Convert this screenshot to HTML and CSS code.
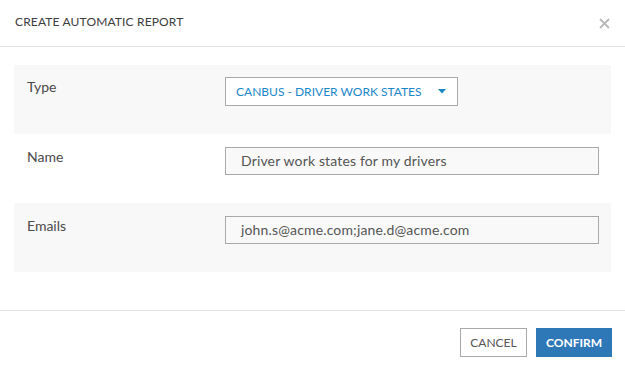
FILE: index.html
```html
<!DOCTYPE html>
<html>
<head>
<meta charset="utf-8">
<link rel="stylesheet" href="styles.css">
</head>
<body>
<div class="dialog">
  <div class="header">
    <span class="title">CREATE AUTOMATIC REPORT</span>
    <span class="close" aria-label="Close">
      <svg width="11" height="11" viewBox="0 0 11 11"><path d="M1 1L10 10M10 1L1 10" stroke="#b9b9b9" stroke-width="1.8" fill="none"/></svg>
    </span>
  </div>
  <div class="body">
    <div class="row shaded">
      <div class="label">Type</div>
      <div class="select">
        <span>CANBUS - DRIVER WORK STATES</span>
        <svg class="caret" width="8" height="5" viewBox="0 0 8 5"><path d="M0 0H8L4 4.5Z" fill="#1b87c9"/></svg>
      </div>
    </div>
    <div class="row">
      <div class="label">Name</div>
      <div class="input">Driver work states for my drivers</div>
    </div>
    <div class="row shaded">
      <div class="label">Emails</div>
      <div class="input">john.s@acme.com;jane.d@acme.com</div>
    </div>
  </div>
  <div class="footer">
    <button class="btn cancel">CANCEL</button>
    <button class="btn confirm">CONFIRM</button>
  </div>
</div>
</body>
</html>
```
FILE: styles.css
```css
html, body {
  margin: 0;
  padding: 0;
  background: #ffffff;
}
body {
  font-family: Lato, "Open Sans", Arial, sans-serif;
  color: #444;
}
.dialog {
  width: 625px;
  height: 370px;
  box-sizing: border-box;
}
.header {
  height: 46px;
  border-bottom: 1px solid #e4e4e4;
  display: flex;
  align-items: center;
  justify-content: space-between;
  padding: 0 14px 0 15px;
}
.title {
  font-size: 12px;
  color: #3d3d3d;
  letter-spacing: 0.15px;
  margin-top: -3px;
}
.close {
  display: flex;
  width: 11px;
  height: 11px;
  margin-right: 1px;
  margin-top: 1px;
}
.body {
  padding: 18px 14px 38px 14px;
}
.row {
  display: flex;
  height: 69px;
  box-sizing: border-box;
  padding-top: 12px;
}
.row + .row {
  padding-top: 13px;
}
.shaded {
  background: #f8f8f8;
}
.label {
  width: 211px;
  padding-left: 13px;
  box-sizing: border-box;
  font-size: 14px;
  line-height: 20px;
  color: #4a4a4a;
}
.select {
  width: 233px;
  height: 29px;
  box-sizing: border-box;
  border: 1px solid #a9a9a9;
  background: #fff;
  display: flex;
  align-items: center;
  justify-content: space-between;
  padding: 0 11px 0 10px;
  color: #1b87c9;
  font-size: 12px;
}
.input {
  width: 374px;
  height: 28px;
  box-sizing: border-box;
  border: 1px solid #a9a9a9;
  background: #f9f9f9;
  padding: 0 15px;
  font-size: 14px;
  line-height: 26px;
  letter-spacing: 0.15px;
  color: #555;
}
.footer {
  border-top: 1px solid #e4e4e4;
  display: flex;
  justify-content: flex-end;
  gap: 9px;
  padding: 17px 13px 0 0;
}
.btn {
  font-family: Lato, "Open Sans", Arial, sans-serif;
  font-size: 12px;
  height: 29px;
  box-sizing: border-box;
  margin: 0;
  cursor: pointer;
}
.cancel {
  width: 67px;
  background: #fff;
  border: 1px solid #aaa;
  color: #555;
}
.confirm {
  width: 76px;
  background: #2f78b8;
  border: 1px solid #2f78b8;
  color: #fff;
  font-weight: 700;
}
```
